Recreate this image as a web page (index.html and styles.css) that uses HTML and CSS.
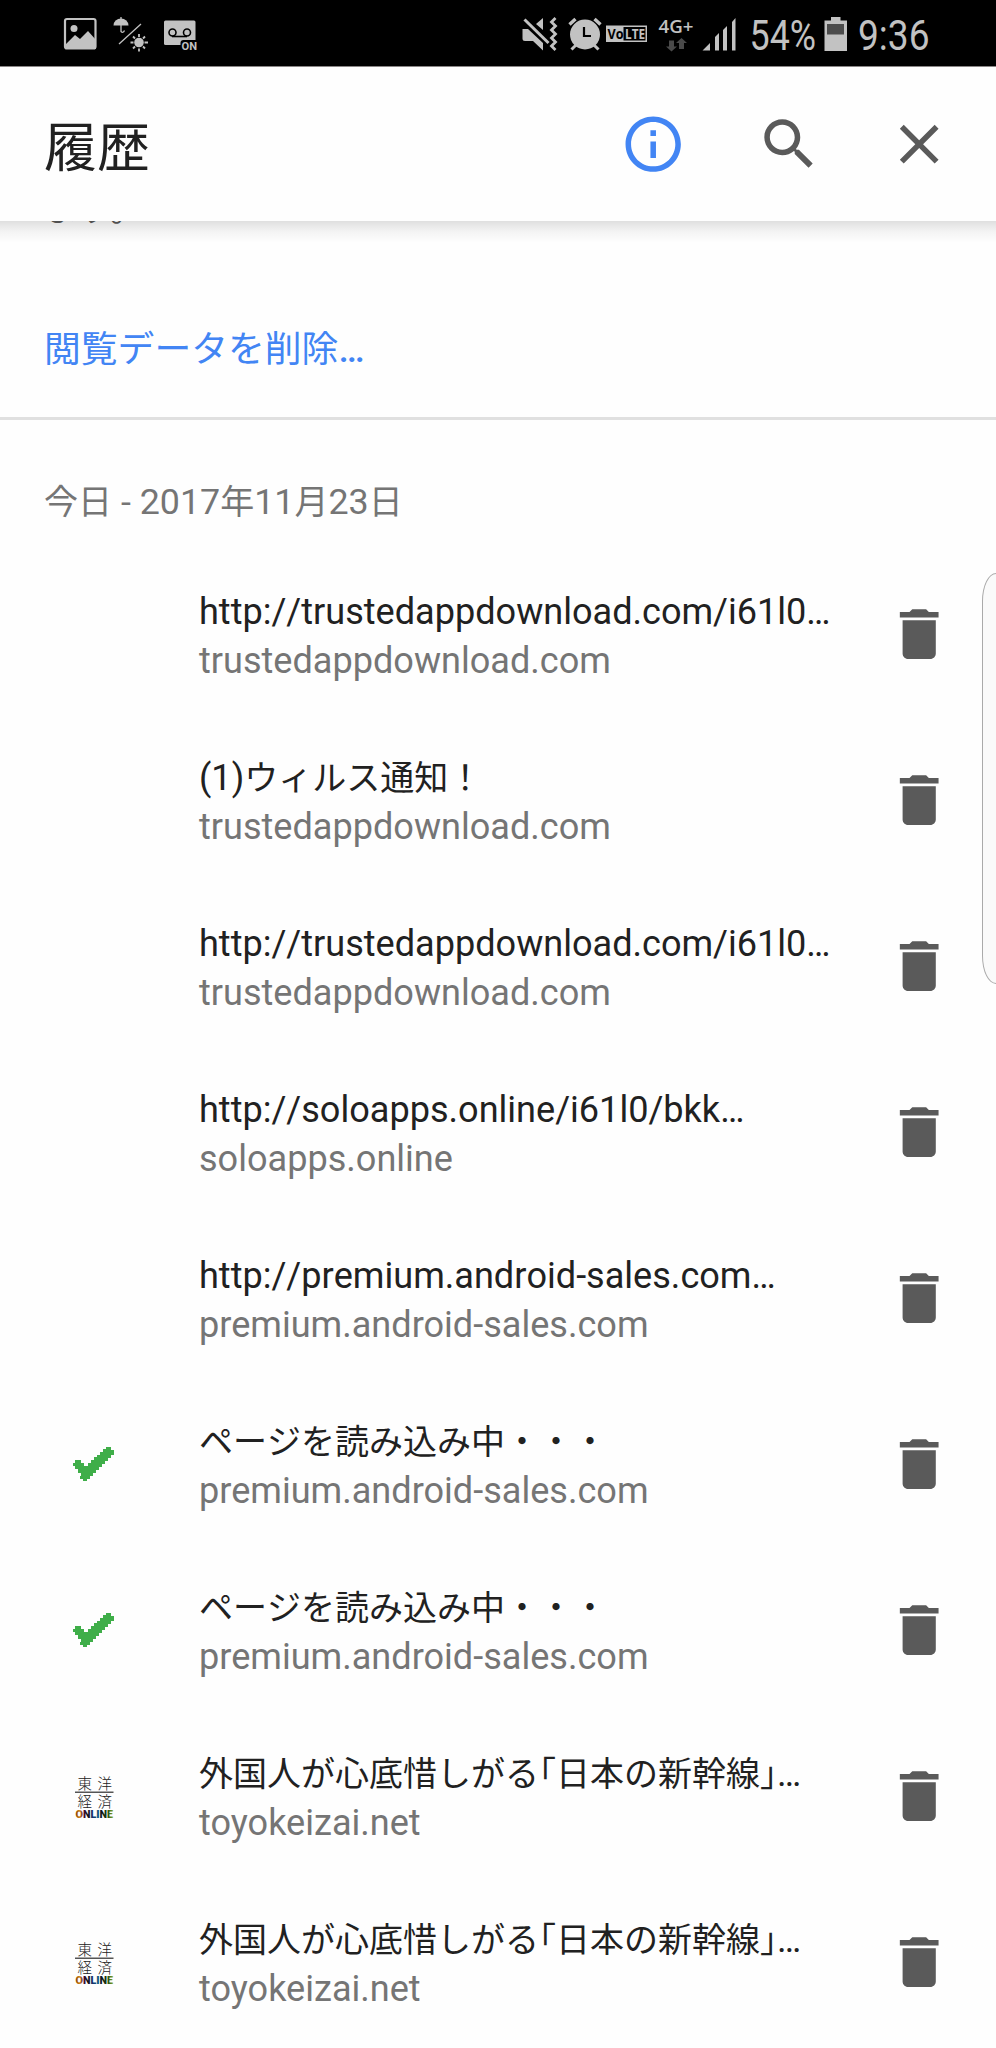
FILE: index.html
```html
<!DOCTYPE html>
<html lang="ja">
<head>
<meta charset="utf-8">
<title>履歴</title>
<link rel="stylesheet" href="styles.css">
</head>
<body>
<svg class="defs" aria-hidden="true">
  <symbol id="trash" viewBox="0 0 24 24"><path d="M6 19c0 1.1.9 2 2 2h8c1.100 0 2-.9 2-2V7H6v12zM19 4h-3.500l-1-1h-5l-1 1H5v2h14V4z"/></symbol>
  <symbol id="check" viewBox="0 0 44 36"><path d="M1 17h2v-3h6v3h3v3h4v-3h3v-3h3v-3h3V9h3V6h3V3h3V1h5v3h3v5h-3v3h-3v3h-3v3h-3v3h-3v3h-3v3h-3v3h-3v3h-3v2h-4v-2h-3v-3H9v-3H6v-4H3v-3H1z"/></symbol>
  <linearGradient id="ink" x1="0" x2="1"><stop offset="0" stop-color="#7a3c00"/><stop offset=".12" stop-color="#d98a1c"/><stop offset=".2" stop-color="#5a0a35"/><stop offset=".32" stop-color="#111"/><stop offset=".45" stop-color="#17306e"/><stop offset=".58" stop-color="#0d5a80"/><stop offset=".7" stop-color="#111"/><stop offset=".86" stop-color="#1f4a12"/><stop offset="1" stop-color="#86a92c"/></linearGradient>
</svg>

<div class="statusbar">
  <div class="status-group">
    <svg width="46" height="66" viewBox="60 0 46 66"><rect x="65" y="19" width="30.500" height="29.500" rx="2" fill="none" stroke="#c2c2c2" stroke-width="2.200"/><circle cx="74" cy="28.500" r="3.500"/><path d="M66 44l9-9 5 4 8-8 8 9v9H66z"/></svg>
    <svg width="54" height="66" viewBox="106 0 54 66"><path d="M113.500 25.500a7.500 7 0 0 1 15 0z"/><path d="M121 17v14.500q2 2 3.500-1M141 24L119 44" fill="none" stroke="#c2c2c2" stroke-width="1.300"/><circle cx="139" cy="42.500" r="4.800"/><path d="M139 34v3M139 48.500v3M130.500 42.500h3M144.500 42.500h3.500M133 36.500l2 2M143 46.500l2 2M145 36.500l-2 2M135 46.500l-2 2" stroke="#c2c2c2" stroke-width="1.800"/></svg>
    <svg width="44" height="66" viewBox="160 0 44 66"><rect x="164" y="20.500" width="31.500" height="24.500" rx="1.500"/><g fill="none" stroke="#000" stroke-width="1.600"><circle cx="172.500" cy="32.500" r="3.500"/><circle cx="187" cy="32.500" r="3.500"/><path d="M172 36.500h15"/></g><rect x="180.500" y="40" width="18" height="12" rx="3" fill="#000"/><text class="tag" x="181.500" y="49.500" textLength="15.500" lengthAdjust="spacingAndGlyphs">ON</text></svg>
  </div>
  <div class="status-group">
    <svg width="44" height="66" viewBox="520 0 44 66"><path d="M523 29h5l15 14v7.500L533 41h-8q-2.500 0-2.500-2.500V29zM536 24l7-6v12z"/><path d="M524.500 19.500l24 23.500" stroke="#c2c2c2" stroke-width="3"/><path d="M555.500 18l-4 4 4 4-4 4 4 4-4 4 4 4-4 4 4 4" fill="none" stroke="#c2c2c2" stroke-width="2.800"/></svg>
    <svg width="40" height="66" viewBox="564 0 40 66"><circle cx="585" cy="34.500" r="15"/><path d="M569.500 24.500l6-5.500M600.500 24.500l-6-5.500" stroke="#c2c2c2" stroke-width="3.400"/><path d="M571.500 49.500l5-5M598.500 49.500l-5-5" stroke="#c2c2c2" stroke-width="3"/><path d="M584 27v9h7" fill="none" stroke="#000" stroke-width="2.200"/></svg>
    <svg width="52" height="66" viewBox="604 0 52 66"><rect x="606" y="25.500" width="41" height="16.500"/><rect x="623.500" y="27" width="22" height="13.500" fill="#000"/><text class="volte dark" x="607.500" y="39" textLength="16" lengthAdjust="spacingAndGlyphs">Vo</text><text class="volte" x="625" y="39" textLength="20" lengthAdjust="spacingAndGlyphs">LTE</text></svg>
    <svg width="42" height="66" viewBox="656 0 42 66"><text class="net" x="658.500" y="33" textLength="35" lengthAdjust="spacingAndGlyphs">4G+</text><path d="M669 40.500h5v6h3l-5.500 5-5.500-5h3zM679 49h5v-6h3l-5.500-5-5.500 5h3z" fill="#4a4a4a"/></svg>
    <svg width="46" height="66" viewBox="698 0 46 66"><path d="M702.500 50.500l7.500-7.500v7.500zM715 50.500V37l4-4v17.500zM723 50.500V30l4-4v24.500zM732 50.500V22l3.500-4v32.500z"/></svg>
    <svg width="76" height="66" viewBox="744 0 76 66"><text class="clock" x="749.500" y="50" textLength="66.500" lengthAdjust="spacingAndGlyphs">54%</text></svg>
    <svg width="34" height="66" viewBox="820 0 34 66"><path d="M831 17h9.500v3.500h6.500V51h-22.500V20.500h6.500z"/><path d="M827 24h17v10.500h-17z" fill="#4c4c4c"/></svg>
    <svg width="82" height="66" viewBox="854 0 82 66"><text class="clock" x="858" y="50" textLength="71.500" lengthAdjust="spacingAndGlyphs">9:36</text></svg>
  </div>
</div>

<header class="toolbar">
  <h1 class="toolbar-title">履歴</h1>
  <div class="toolbar-actions">
    <svg class="icon info" viewBox="0 0 24 24"><path d="M11 17h2v-6h-2v6zm1-15C6.480 2 2 6.480 2 12s4.480 10 10 10 10-4.480 10-10S17.520 2 12 2zm0 18c-4.410 0-8-3.590-8-8s3.590-8 8-8 8 3.590 8 8-3.590 8-8 8zM11 9h2V7h-2v2z"/></svg>
    <svg class="icon search" viewBox="0 0 24 24"><path d="M15.500 14h-.79l-.28-.27C15.410 12.590 16 11.110 16 9.500 16 5.910 13.090 3 9.500 3S3 5.910 3 9.500 5.910 16 9.500 16c1.610 0 3.090-.59 4.230-1.570l.27.28v.79l5 4.990L20.490 19l-4.990-5zm-6 0C7.010 14 5 11.990 5 9.500S7.010 5 9.500 5 14 7.010 14 9.500 11.990 14 9.500 14z"/></svg>
    <svg class="icon" viewBox="0 0 24 24"><path d="M19 6.410L17.590 5 12 10.590 6.410 5 5 6.410 10.590 12 5 17.590 6.410 19 12 13.410 17.590 19 19 17.590 13.410 12z"/></svg>
  </div>
</header>

<main class="content">
  <section class="intro">
    <p class="notice">ます。</p>
    <a class="clear-link">閲覧データを削除<span class="dots">…</span></a>
  </section>
  <h2 class="day"><span class="jp">今日</span> - 2017<span class="jp">年</span>11<span class="jp">月</span>23<span class="jp">日</span></h2>
  <ul class="history">
    <li class="row"><span class="favicon"></span><div class="text"><div class="title">http://trustedappdownload.com/i61l0…</div><div class="host">trustedappdownload.com</div></div><svg class="icon"><use href="#trash"/></svg></li>
    <li class="row"><span class="favicon"></span><div class="text"><div class="title">(1)<span class="jp">ウィルス通知！</span></div><div class="host">trustedappdownload.com</div></div><svg class="icon"><use href="#trash"/></svg></li>
    <li class="row"><span class="favicon"></span><div class="text"><div class="title">http://trustedappdownload.com/i61l0…</div><div class="host">trustedappdownload.com</div></div><svg class="icon"><use href="#trash"/></svg></li>
    <li class="row"><span class="favicon"></span><div class="text"><div class="title">http://soloapps.online/i61l0/bkk…</div><div class="host">soloapps.online</div></div><svg class="icon"><use href="#trash"/></svg></li>
    <li class="row"><span class="favicon"></span><div class="text"><div class="title">http://premium.android-sales.com…</div><div class="host">premium.android-sales.com</div></div><svg class="icon"><use href="#trash"/></svg></li>
    <li class="row"><span class="favicon"><svg class="check"><use href="#check"/></svg></span><div class="text"><div class="title"><span class="jp">ページを読み込み中・・・</span></div><div class="host">premium.android-sales.com</div></div><svg class="icon"><use href="#trash"/></svg></li>
    <li class="row"><span class="favicon"><svg class="check"><use href="#check"/></svg></span><div class="text"><div class="title"><span class="jp">ページを読み込み中・・・</span></div><div class="host">premium.android-sales.com</div></div><svg class="icon"><use href="#trash"/></svg></li>
    <li class="row"><span class="favicon"><svg class="toyo" viewBox="68 1770 52 56"><g class="toyo-kanji"><text x="77.500" y="1789">東</text><text x="97.500" y="1789">洋</text><text x="77.500" y="1807">経</text><text x="97.500" y="1807">済</text></g><path d="M75 1792.200h38.500" stroke="#555" stroke-width="1.400"/><text class="toyo-online" x="75.500" y="1817.500" textLength="37.500" lengthAdjust="spacingAndGlyphs" fill="url(#ink)">ONLINE</text></svg></span><div class="text"><div class="title"><span class="jp">外国人が心底惜しがる<span class="half">「</span>日本の新幹線<span class="half">」</span></span>…</div><div class="host">toyokeizai.net</div></div><svg class="icon"><use href="#trash"/></svg></li>
    <li class="row"><span class="favicon"><svg class="toyo" viewBox="68 1770 52 56"><g class="toyo-kanji"><text x="77.500" y="1789">東</text><text x="97.500" y="1789">洋</text><text x="77.500" y="1807">経</text><text x="97.500" y="1807">済</text></g><path d="M75 1792.200h38.500" stroke="#555" stroke-width="1.400"/><text class="toyo-online" x="75.500" y="1817.500" textLength="37.500" lengthAdjust="spacingAndGlyphs" fill="url(#ink)">ONLINE</text></svg></span><div class="text"><div class="title"><span class="jp">外国人が心底惜しがる<span class="half">「</span>日本の新幹線<span class="half">」</span></span>…</div><div class="host">toyokeizai.net</div></div><svg class="icon"><use href="#trash"/></svg></li>
  </ul>
</main>
<div class="edge-handle"></div>
</body>
</html>
```

FILE: styles.css
```css
* { box-sizing: border-box; }
html, body { margin: 0; height: 2048px; overflow: hidden; }
body {
  position: relative;
  display: flex;
  flex-direction: column;
  width: 996px;
  background: #fefefe;
  color: #212121;
  font-family: Roboto, "Noto Sans CJK JP", sans-serif;
  font-size: 36.100px;
}
h1, h2, p, ul { margin: 0; padding: 0; font-weight: 400; }
.defs { position: absolute; width: 0; height: 0; }
.jp { font-size: 34px; }

.statusbar {
  display: flex;
  justify-content: space-between;
  flex: none;
  height: 67px;
  padding: 0 60px;
  background: #000;
  border-bottom: 1px solid #8a8686;
}
.status-group { display: flex; }
.status-group svg { display: block; fill: #c2c2c2; }
.tag { font: 700 11.500px Roboto, sans-serif; }
.volte { font: 700 14.500px "Open Sans", sans-serif; }
.dark { fill: #000; }
.net { font: 600 18.500px "Open Sans", sans-serif; }
.clock { font: 400 42px Roboto, sans-serif; }

.toolbar {
  display: flex;
  align-items: center;
  justify-content: space-between;
  flex: none;
  height: 154px;
  padding: 0 44px 0 44px;
  background: #fefefe;
  position: relative;
  z-index: 1;
}
.toolbar::after {
  content: "";
  position: absolute;
  left: 0;
  right: 0;
  top: 100%;
  height: 22px;
  background: linear-gradient(rgba(0,0,0,.12), rgba(0,0,0,.04) 50%, rgba(0,0,0,0));
}
.toolbar-title { font-size: 53px; line-height: 76px; padding-top: 9px; }
.toolbar-actions { display: flex; }
.icon { display: block; flex: none; width: 66.4px; height: 66.4px; fill: #5a5a5a; }
.info { fill: #4285f4; }
.search { margin: 0 63.600px 0 69.200px; }

.content { flex: 1; }
.intro { height: 199px; border-bottom: 3px solid #e0e0e0; padding-left: 44px; }
.notice {
  display: flex;
  align-items: flex-end;
  height: 10px;
  overflow: hidden;
  font-size: 34.600px;
  line-height: 44px;
  color: #5a5a5a;
}
.clear-link { display: block; margin-top: 91px; font-size: 36.800px; line-height: 56px; height: 56px; color: #4285f4; }
.dots { font-weight: 500; }
.day { padding: 55px 0 0 44px; height: 131px; line-height: 54px; font-size: 35.800px; color: #757575; }

.history { list-style: none; }
.row { display: flex; align-items: center; height: 166px; padding-right: 44px; }
.favicon { display: flex; justify-content: center; width: 188px; flex: none; }
.check { width: 44px; height: 36px; fill: #3fae49; }
.toyo { width: 52px; height: 56px; margin-top: 3px; }
.toyo-kanji { font: 300 14.500px "Noto Sans CJK JP", sans-serif; fill: #1a1a1a; }
.toyo-online { font: 900 11px Roboto, sans-serif; }
.text { flex: 1; padding: 5px 0 0 11px; white-space: nowrap; }
.title, .host { height: 48.500px; line-height: 48.500px; }
.title { font-kerning: none; }
.host { color: #757575; }
.half { font-feature-settings: "halt"; }

.edge-handle {
  position: absolute;
  left: 982px;
  top: 573px;
  width: 30px;
  height: 411px;
  border: 1.500px solid #aaa;
  border-radius: 14px / 28px;
  background: #fafafa;
}
```
